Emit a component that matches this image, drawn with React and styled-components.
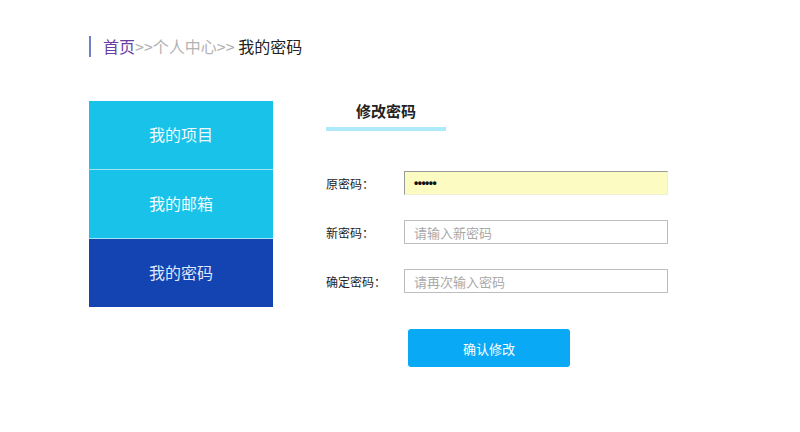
import React from "react";
import styled, { createGlobalStyle } from "styled-components";

const GlobalStyle = createGlobalStyle`
  body {
    margin: 0;
    background: #ffffff;
    font-family: "Noto Sans CJK SC", "Liberation Sans", sans-serif;
  }
`;

const Page = styled.div`
  width: 800px;
  height: 432px;
  padding: 36px 0 0 89px;
  box-sizing: border-box;
`;

const Breadcrumb = styled.div`
  display: flex;
  align-items: center;
  height: 21px;
  border-left: 2px solid #6f80c4;
  padding-left: 12px;
  font-size: 16px;
  line-height: 21px;
`;

const Crumb = styled.span`
  color: ${(p) => p.$color};
`;

const Main = styled.div`
  display: flex;
  align-items: flex-start;
  margin-top: 44px;
  gap: 53px;
`;

const Sidebar = styled.ul`
  list-style: none;
  margin: 0;
  padding: 0;
  width: 184px;
  display: flex;
  flex-direction: column;
  gap: 1px;
  background: #9fe3f4;
`;

const NavItem = styled.li`
  height: 68px;
  display: flex;
  align-items: center;
  justify-content: center;
  padding-bottom: 2px;
  box-sizing: border-box;
  font-size: 16px;
  background: ${(p) => (p.$active ? "#1444b2" : "#19c2e8")};
  color: ${(p) => (p.$active ? "#dfe8fa" : "#eefaff")};
`;

const Content = styled.div`
  display: flex;
  flex-direction: column;
`;

const Title = styled.div`
  width: 120px;
  text-align: center;
  font-size: 15px;
  font-weight: bold;
  color: #222;
  line-height: 20px;
  padding-bottom: 6px;
  border-bottom: 4px solid #aeeaf9;
`;

const Form = styled.form`
  margin-top: 40px;
  display: flex;
  flex-direction: column;
  gap: 25px;
`;

const Row = styled.div`
  display: grid;
  grid-template-columns: 78px 264px;
  align-items: center;
`;

const Label = styled.label`
  font-size: 12px;
  color: #222;
`;

const Input = styled.input`
  box-sizing: border-box;
  width: 264px;
  height: 24px;
  padding: 0 9px;
  font-family: "Noto Sans CJK SC", "Liberation Sans", sans-serif;
  font-size: 13px;
  color: #222;
  outline: none;
  border: 1px solid #bdbdbd;
  background: ${(p) => (p.$filled ? "#fbfbc2" : "#fff")};
  ${(p) =>
    p.$filled &&
    `border-top-color: #9a9a9a; border-left-color: #9a9a9a; border-right-color: #f0f0d8; border-bottom-color: #f0f0d8; font-family: "Liberation Sans", sans-serif; font-size: 12px; font-weight: bold; letter-spacing: -0.5px; color: #111;`}

  &::placeholder {
    color: #a8a8a8;
  }
`;

const Submit = styled.button`
  margin: 11px 0 0 82px;
  width: 162px;
  height: 38px;
  border: none;
  border-radius: 3px;
  background: #0aa9f6;
  color: #fff;
  font-family: "Noto Sans CJK SC", "Liberation Sans", sans-serif;
  font-size: 13px;
  cursor: pointer;
`;

export default function App() {
  const fields = [
    { label: "原密码：", value: "123456", type: "password", filled: true },
    { label: "新密码：", placeholder: "请输入新密码" },
    { label: "确定密码：", placeholder: "请再次输入密码" },
  ];

  return (
    <>
      <GlobalStyle />
      <Page>
        <Breadcrumb>
          <Crumb $color="#6a3d9e">首页</Crumb>
          <Crumb $color="#b3b3b3">&gt;&gt;个人中心&gt;&gt;</Crumb>
          <Crumb $color="#222">&nbsp;我的密码</Crumb>
        </Breadcrumb>
        <Main>
          <Sidebar>
            <NavItem>我的项目</NavItem>
            <NavItem>我的邮箱</NavItem>
            <NavItem $active>我的密码</NavItem>
          </Sidebar>
          <Content>
            <Title>修改密码</Title>
            <Form onSubmit={(e) => e.preventDefault()}>
              {fields.map((f) => (
                <Row key={f.label}>
                  <Label>{f.label}</Label>
                  <Input
                    $filled={f.filled}
                    type={f.type || "text"}
                    defaultValue={f.value}
                    placeholder={f.placeholder}
                    readOnly={f.filled}
                  />
                </Row>
              ))}
              <Submit type="submit">确认修改</Submit>
            </Form>
          </Content>
        </Main>
      </Page>
    </>
  );
}
